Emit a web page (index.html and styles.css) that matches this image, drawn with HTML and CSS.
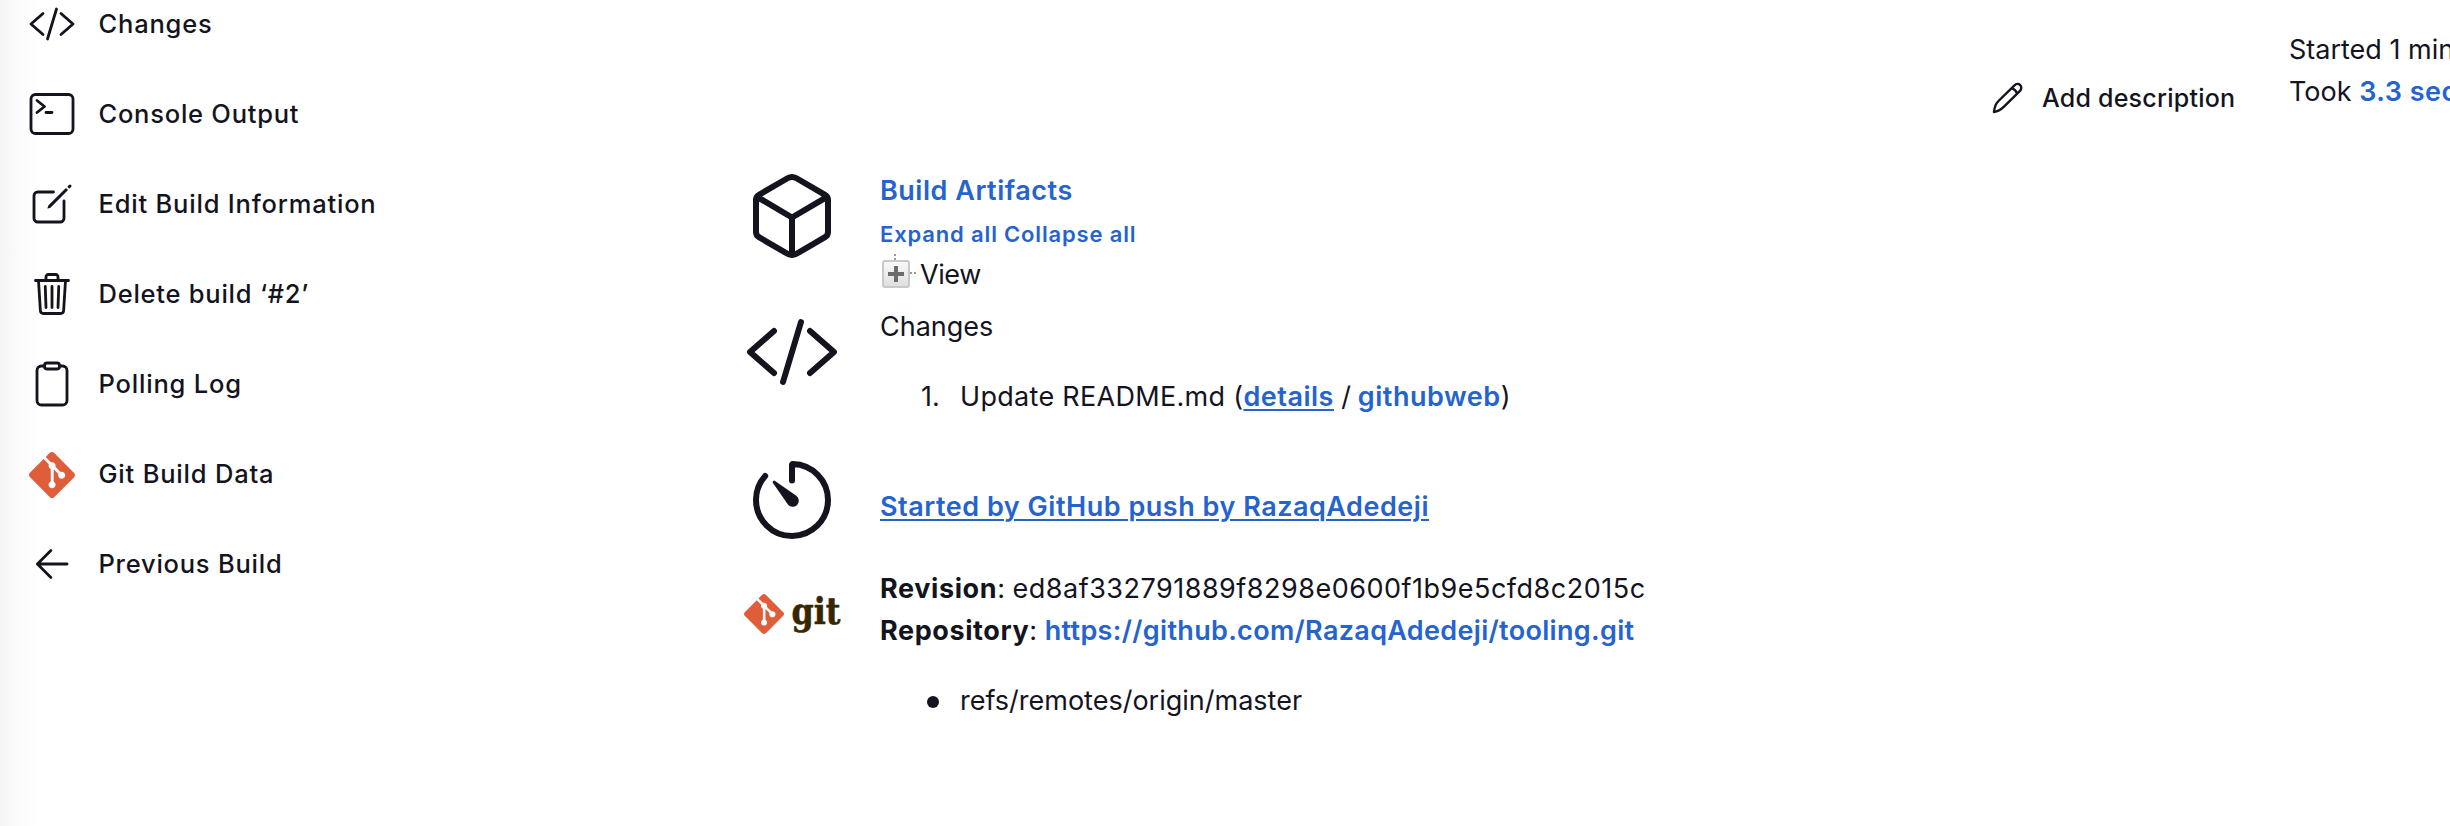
FILE: index.html
```
<!DOCTYPE html>
<html lang="en">
<head>
<meta charset="utf-8">
<title>Build #2</title>
<link rel="stylesheet" href="styles.css">
</head>
<body>
<svg class="defs" aria-hidden="true">
  <symbol id="code" viewBox="0 0 512 512">
    <path d="M160 368 32 256l128-112M352 368l128-112-128-112M304 96l-96 320"/>
  </symbol>
  <symbol id="git-mark" viewBox="0 0 24 24">
    <path d="M23.546 10.93L13.067.452c-.604-.603-1.582-.603-2.188 0L8.708 2.627l2.76 2.76c.645-.215 1.379-.07 1.889.441.516.515.658 1.258.438 1.9l2.658 2.66c.645-.223 1.387-.078 1.9.435.721.72.721 1.884 0 2.604-.719.719-1.881.719-2.6 0-.539-.541-.674-1.337-.404-1.996L12.86 8.955v6.525c.176.086.342.203.488.348.713.721.713 1.883 0 2.6-.719.721-1.889.721-2.609 0-.719-.719-.719-1.879 0-2.598.182-.18.387-.316.605-.406V8.835c-.217-.091-.424-.222-.6-.401-.545-.545-.676-1.342-.396-2.009L7.636 3.7.45 10.881c-.6.605-.6 1.584 0 2.189l10.48 10.477c.604.604 1.582.604 2.186 0l10.43-10.43c.605-.603.605-1.582 0-2.187"/>
  </symbol>
</svg>
<div class="page">
  <nav class="sidebar">
    <a class="task"><svg class="icon"><use href="#code"/></svg><span class="wide">Changes</span></a>
    <a class="task"><svg class="icon" viewBox="0 0 512 512"><rect x="32" y="48" width="448" height="416" rx="48"/><path d="M96 112l80 64-80 64M192 240h64"/></svg><span>Console Output</span></a>
    <a class="task"><svg class="icon" viewBox="0 0 512 512"><path d="M384 224v184a40 40 0 0 1-40 40H104a40 40 0 0 1-40-40V168a40 40 0 0 1 40-40h167.480"/><path class="solid" d="M459.940 53.250a16.060 16.060 0 0 0-23.220-.56L424.350 65a8 8 0 0 0 0 11.310l11.340 11.320a8 8 0 0 0 11.340 0l12.060-12c6.100-6.090 6.670-16.010.85-22.380zM399.340 90 218.820 270.200a9 9 0 0 0-2.310 3.930L208.160 299a3.910 3.910 0 0 0 4.860 4.860l24.850-8.350a9 9 0 0 0 3.930-2.310L422 112.660A9 9 0 0 0 422 100l-9.950-10a9 9 0 0 0-12.710 0z"/></svg><span class="wide">Edit Build Information</span></a>
    <a class="task"><svg class="icon" viewBox="0 0 512 512"><path d="M112 112l20 320c.95 18.490 14.400 32 32 32h184c17.670 0 30.870-13.510 32-32l20-320M80 112h352M192 112V72a23.930 23.930 0 0 1 24-24h80a23.930 23.930 0 0 1 24 24v40M256 176v224M184 176l8 224M328 176l-8 224"/></svg><span>Delete build ‘#2’</span></a>
    <a class="task"><svg class="icon" viewBox="0 0 512 512"><path d="M336 64h32a48 48 0 0 1 48 48v320a48 48 0 0 1-48 48H144a48 48 0 0 1-48-48V112a48 48 0 0 1 48-48h32"/><rect x="176" y="32" width="160" height="64" rx="26"/></svg><span class="wide">Polling Log</span></a>
    <a class="task"><svg class="icon git"><use href="#git-mark"/></svg><span class="wide">Git Build Data</span></a>
    <a class="task"><svg class="icon" viewBox="0 0 512 512"><path d="M244 400 100 256l144-144M106 256h310"/></svg><span>Previous Build</span></a>
  </nav>

  <main class="summary">
    <section class="entry artifacts">
      <svg class="icon large" viewBox="0 0 512 512"><path d="M448 341.370V170.610A32 32 0 0 0 432.110 143l-152-88.460a47.940 47.940 0 0 0-48.240 0L79.890 143A32 32 0 0 0 64 170.610v170.760A32 32 0 0 0 79.890 369l152 88.460a48 48 0 0 0 48.240 0l152-88.460A32 32 0 0 0 448 341.370zM69 153.990l187 110 187-110M256 463.990v-200"/></svg>
      <div class="details">
        <div><a>Build Artifacts</a></div>
        <div class="tree-actions"><a>Expand all</a> <a>Collapse all</a></div>
        <div class="tree-node">
          <svg class="expander" viewBox="0 0 36 36">
            <defs><linearGradient id="face" x2="0" y2="1"><stop stop-color="#fafafa"/><stop offset="1" stop-color="#dedede"/></linearGradient></defs>
            <path d="M15 0v2M15 4v2M30 19h2M34 19h2" stroke="#999" stroke-width="2"/>
            <rect x="3" y="7" width="26" height="26" rx="2" fill="url(#face)" stroke="#c9c9c9" stroke-width="2"/>
            <path d="M8 20h16M16 12v16" stroke="#6c6c6c" stroke-width="4"/>
          </svg><span class="view">View</span>
        </div>
      </div>
    </section>

    <section class="entry changes">
      <svg class="icon large"><use href="#code"/></svg>
      <div class="details">
        <div>Changes</div>
        <ol class="list numbered"><li><span class="commit">Update README.md (</span><a class="underlined">details</a><span class="slash"> / </span><a>githubweb</a>)</li></ol>
      </div>
    </section>

    <section class="entry cause">
      <svg class="icon large" viewBox="0 0 512 512"><path d="M112.910 128A191.850 191.850 0 0 0 64 254c-1.180 106.350 85.650 193.800 192 194 106.200.2 192-85.830 192-192 0-104.540-83.550-189.610-187.500-192a4.360 4.360 0 0 0-4.500 4.370V152"/><path class="solid" d="M233.380 278.630l-79-113a8.130 8.130 0 0 1 11.320-11.320l113 79a32.500 32.500 0 0 1-37.250 53.260 33.210 33.210 0 0 1-8.070-7.940z"/></svg>
      <div class="details"><a class="underlined">Started by GitHub push by RazaqAdedeji</a></div>
    </section>

    <section class="entry scm">
      <svg class="git-logo" viewBox="0 0 100 96"><use class="git" href="#git-mark" x="0" y="28" width="40" height="40"/><text class="git-word" x="47.500" y="57.600" textLength="49" lengthAdjust="spacingAndGlyphs">git</text></svg>
      <div class="details">
        <div><b>Revision</b>: <span class="hash">ed8af332791889f8298e0600f1b9e5cfd8c2015c</span></div>
        <div><b>Repository</b>: <a class="url">https://github.com/RazaqAdedeji/tooling.git</a></div>
        <ul class="list bulleted"><li>refs/remotes/origin/master</li></ul>
      </div>
    </section>
  </main>

  <a class="describe">
    <svg class="pencil" viewBox="0 0 32 32"><path d="M2 30c.3-4 2-8.500 4.500-11L22.500 3.300c1.700-1.700 4.200-1.700 5.700-.2s1.500 4-.2 5.700L12 24.600C9.500 27 6 29.500 2 30zM19.600 6.200q4 1.300 5.500 5.400"/></svg>
    <span>Add description</span>
  </a>
  <aside class="timing">
    <div>Started 1 min</div>
    <div>Took <a>3.3 sec</a></div>
  </aside>
</div>
</body>
</html>
```
FILE: styles.css
```
body {
  margin: 0;
  background: #fff;
  color: #14141f;
  font: 400 27px/42px Inter, sans-serif;
  overflow: hidden;
}

.defs {
  display: block;
  width: 0;
  height: 0;
}

.page {
  display: flex;
  align-items: flex-start;
  height: 826px;
  overflow: hidden;
}

a {
  color: #2563cf;
  font-weight: 600;
  letter-spacing: 0.52px;
}

.underlined {
  text-decoration: underline;
  text-decoration-thickness: 2px;
  text-underline-offset: 3px;
}

b {
  letter-spacing: 0.6px;
}

/* Sidebar */
.sidebar {
  flex: 0 0 744px;
  box-sizing: border-box;
  height: 826px;
  padding-left: 28px;
  background: linear-gradient(90deg, #f5f5f5, #fcfcfc 20px, #fff 40px) no-repeat;
}

.task {
  display: flex;
  align-items: center;
  gap: 22.5px;
  height: 90px;
  color: inherit;
  font-size: 25.5px;
  font-weight: 500;
  letter-spacing: 0.76px;
}

.task:first-child {
  margin-top: -21px;
}

.task .wide {
  letter-spacing: 0.8px;
}

.icon {
  flex: none;
  width: 48px;
  height: 48px;
  fill: none;
  stroke: #14141f;
  stroke-width: 30;
  stroke-linecap: round;
  stroke-linejoin: round;
}

.icon .solid {
  fill: #14141f;
  stroke: none;
}

.git,
.icon.git {
  fill: #e05d3a;
  stroke: none;
}

.task .icon.git {
  width: 46px;
  height: 46px;
  margin: 1px 1px 0;
}

.large {
  width: 96px;
  height: 96px;
  stroke-width: 32;
}

/* Build summary */
.summary {
  flex: none;
  display: grid;
  grid-template-rows: 136px 148px 114px auto;
  width: 1246px;
  padding-top: 168px;
}

.entry {
  display: flex;
  align-items: flex-start;
  gap: 40px;
}

.details {
  padding-top: 2px;
  white-space: nowrap;
}

.tree-actions {
  padding-top: 1px;
  height: 41px;
  font-size: 22px;
}

.tree-actions a {
  letter-spacing: 0.85px;
}

.tree-node {
  display: flex;
  height: 42px;
}

.expander {
  width: 36px;
  height: 36px;
  fill: none;
}

.view {
  margin-left: 4px;
  letter-spacing: -0.4px;
}

.list {
  margin: 28px 0 0;
  padding-left: 41px;
  list-style: none;
}

.list li {
  display: flex;
  align-items: center;
  white-space: pre;
}

.numbered li::before {
  content: "1.";
  width: 39px;
}

.bulleted li::before {
  content: "";
  width: 12px;
  height: 12px;
  margin: 2px 21px 0 6px;
  border-radius: 50%;
  background: #14141f;
}

.commit {
  letter-spacing: 0.3px;
}

.slash {
  letter-spacing: -0.35px;
}

.cause .details {
  padding-top: 34px;
}

.git-logo {
  flex: none;
  width: 100px;
  height: 96px;
  margin-right: -4px;
  overflow: visible;
}

.git-word {
  fill: #362701;
  stroke: #362701;
  stroke-width: 0.6px;
  font: 700 37px "DejaVu Serif", serif;
}

.hash {
  letter-spacing: 0.5px;
}

.url {
  letter-spacing: 0.32px;
}

/* Description and timing */
.describe {
  flex: none;
  display: flex;
  align-items: center;
  gap: 18px;
  width: 299px;
  margin-top: 77px;
  color: inherit;
  font-size: 25px;
  font-weight: 500;
  letter-spacing: 0.23px;
}

.pencil {
  width: 32px;
  height: 32px;
  margin-left: 2px;
  fill: none;
  stroke: #14141f;
  stroke-width: 2.4;
  stroke-linejoin: round;
}

.timing {
  flex: none;
  margin-top: 29px;
  white-space: nowrap;
}
```
